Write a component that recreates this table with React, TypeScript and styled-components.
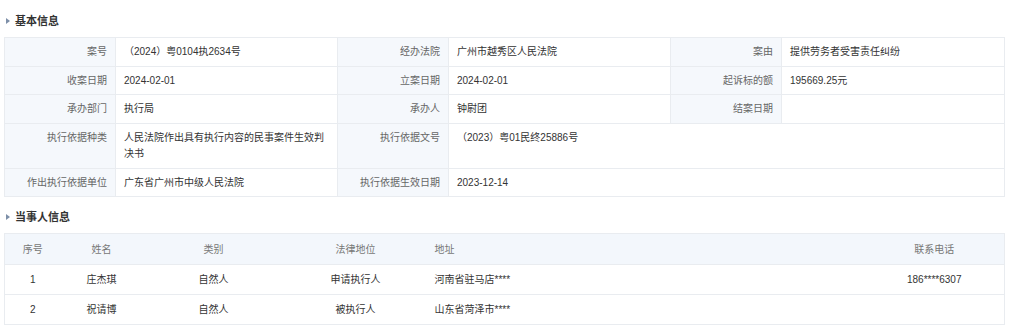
import styled, { createGlobalStyle } from "styled-components";

const GlobalStyle = createGlobalStyle`
  body {
    margin: 0;
    background: #fff;
    font-family: "Liberation Sans", "Noto Sans CJK SC", sans-serif;
  }
`;

type Field = { label: string; value: string; span?: number };

const basicRows: Field[][] = [
  [
    { label: "案号", value: "（2024）粤0104执2634号" },
    { label: "经办法院", value: "广州市越秀区人民法院" },
    { label: "案由", value: "提供劳务者受害责任纠纷" },
  ],
  [
    { label: "收案日期", value: "2024-02-01" },
    { label: "立案日期", value: "2024-02-01" },
    { label: "起诉标的额", value: "195669.25元" },
  ],
  [
    { label: "承办部门", value: "执行局" },
    { label: "承办人", value: "钟尉团" },
    { label: "结案日期", value: "" },
  ],
  [
    { label: "执行依据种类", value: "人民法院作出具有执行内容的民事案件生效判决书" },
    { label: "执行依据文号", value: "（2023）粤01民终25886号", span: 3 },
  ],
  [
    { label: "作出执行依据单位", value: "广东省广州市中级人民法院" },
    { label: "执行依据生效日期", value: "2023-12-14", span: 3 },
  ],
];

const partyCols = [
  { title: "序号", width: 56, align: "center" },
  { title: "姓名", width: 82, align: "center" },
  { title: "类别", width: 142, align: "center" },
  { title: "法律地位", width: 142, align: "center" },
  { title: "地址", width: 438, align: "left" },
  { title: "联系电话", width: 140, align: "center" },
];

const parties = [
  ["1", "庄杰琪", "自然人", "申请执行人", "河南省驻马店****", "186****6307"],
  ["2", "祝请博", "自然人", "被执行人", "山东省菏泽市****", ""],
];

export default function App() {
  return (
    <>
      <GlobalStyle />
      <Page>
        <SectionTitle>基本信息</SectionTitle>
        <InfoTable>
          <colgroup>
            <col width={111} />
            <col width={222} />
            <col width={111} />
            <col width={222} />
            <col width={111} />
            <col width={223} />
          </colgroup>
          <tbody>
            {basicRows.map((row, i) => (
              <tr key={i}>
                {row.map((f) => (
                  <FieldCells key={f.label} field={f} />
                ))}
              </tr>
            ))}
          </tbody>
        </InfoTable>

        <SectionTitle $gap>当事人信息</SectionTitle>
        <PartyTable>
          <colgroup>
            {partyCols.map((c) => (
              <col key={c.title} width={c.width} />
            ))}
          </colgroup>
          <thead>
            <tr>
              {partyCols.map((c) => (
                <HeadCell key={c.title} $align={c.align}>
                  {c.title}
                </HeadCell>
              ))}
            </tr>
          </thead>
          <tbody>
            {parties.map((p) => (
              <tr key={p[0]}>
                {p.map((v, j) => (
                  <BodyCell key={j} $align={partyCols[j].align}>
                    {v}
                  </BodyCell>
                ))}
              </tr>
            ))}
          </tbody>
        </PartyTable>
      </Page>
    </>
  );
}

const FieldCells = ({ field }: { field: Field }) => (
  <>
    <LabelCell>{field.label}</LabelCell>
    <ValueCell colSpan={field.span ?? 1}>{field.value}</ValueCell>
  </>
);

const Page = styled.div`
  padding: 13px 12px 0 4px;
`;

const SectionTitle = styled.h3<{ $gap?: boolean }>`
  margin: ${(p) => (p.$gap ? "12px" : "0")} 0 8px 2px;
  display: flex;
  align-items: center;
  gap: 5px;
  font-size: 11px;
  line-height: 16px;
  font-weight: bold;
  color: #333;
  &:before {
    content: "";
    width: 0;
    height: 0;
    border-top: 3px solid transparent;
    border-bottom: 3px solid transparent;
    border-left: 4px solid #7d8fa8;
  }
`;

const InfoTable = styled.table`
  width: 1000px;
  table-layout: fixed;
  border-collapse: collapse;
  font-size: 10px;
  line-height: 16.5px;
  td {
    border: 1px solid #e9ecf0;
    padding: 6px 8px 5px;
    vertical-align: top;
  }
`;

const LabelCell = styled.td`
  background: #f5f8fc;
  color: #666;
  text-align: right;
`;

const ValueCell = styled.td`
  color: #333;
  text-align: left;
`;

const PartyTable = styled.table`
  width: 1000px;
  table-layout: fixed;
  border-collapse: collapse;
  font-size: 10px;
  line-height: 17px;
  border: 1px solid #e9ecf0;
`;

const HeadCell = styled.th<{ $align: string }>`
  background: #f3f7fc;
  color: #777;
  font-weight: normal;
  text-align: ${(p) => p.$align};
  padding: 7px 8px 6px;
  border-bottom: 1px solid #e9ecf0;
`;

const BodyCell = styled.td<{ $align: string }>`
  color: #333;
  text-align: ${(p) => p.$align};
  padding: 6px 8px 6px;
  border-bottom: 1px solid #e9ecf0;
`;
